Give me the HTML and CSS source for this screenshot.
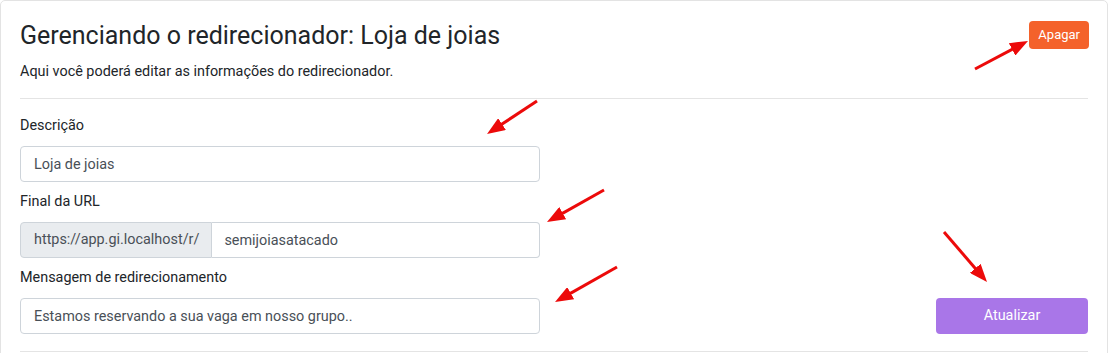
FILE: index.html
```html
<!DOCTYPE html>
<html lang="pt-BR">
<head>
<meta charset="UTF-8"/>
<meta name="viewport" content="width=device-width,initial-scale=1.0"/>
<title>Gerenciando o redirecionador</title>
<link rel="stylesheet" href="styles.css">
</head>
<body>

<div class="card">
  <!-- header -->
  <div class="card-head">
    <div>
      <h1 class="title">Gerenciando o redirecionador: Loja de joias</h1>
      <p class="subtitle">Aqui você poderá editar as informações do redirecionador.</p>
    </div>
    <button class="btn btn-danger">Apagar</button>
  </div>
  <hr>

  <!-- form -->
  <form class="form-row" onsubmit="return false">
    <div class="fields">
      <div class="field">
        <label for="desc">Descrição</label>
        <input id="desc" class="input" type="text" value="Loja de joias">
      </div>
      <div class="field">
        <label for="slug">Final da URL</label>
        <div class="input-group">
          <span class="prepend">https://app.gi.localhost/r/</span>
          <input id="slug" class="input" type="text" value="semijoiasatacado">
        </div>
      </div>
      <div class="field">
        <label for="msg">Mensagem de redirecionamento</label>
        <input id="msg" class="input" type="text" value="Estamos reservando a sua vaga em nosso grupo..">
      </div>
    </div>
    <button class="btn btn-primary">Atualizar</button>
  </form>
  <hr class="bottom">
</div>

<!-- annotation arrows -->
<svg class="marks" width="1110" height="353" viewBox="0 0 1110 353">
  <defs>
    <marker id="head" markerUnits="userSpaceOnUse" markerWidth="18" markerHeight="14" refX="10" refY="7" orient="auto">
      <path d="M0,0 L18,7 L0,14 z" fill="#ec0a0a"/>
    </marker>
  </defs>
  <g stroke="#ec0a0a" stroke-width="3" marker-end="url(#head)">
    <line x1="975" y1="69" x2="1020.9" y2="44.7"/>
    <line x1="537" y1="101" x2="493.7" y2="129.6"/>
    <line x1="604" y1="190" x2="554" y2="218.1"/>
    <line x1="617" y1="267" x2="562" y2="298.1"/>
    <line x1="944" y1="232" x2="981.8" y2="275.9"/>
  </g>
</svg>

</body>
</html>
```

FILE: styles.css
```css
*{margin:0;padding:0;box-sizing:border-box}
body{background:#fff;color:#212529;font-family:Roboto,"Liberation Sans",sans-serif;font-size:14.4px;line-height:20px;position:relative;overflow:hidden}

/* ---------- card ---------- */
.card{
  width:1108px;min-height:400px;padding:20px 19px 0;
  border:1px solid #e3e3e3;border-radius:5px;background:#fff
}
.card-head{display:flex;justify-content:space-between;align-items:flex-start}
.title{font-size:25px;font-weight:400;line-height:29px;color:#212529}
.subtitle{margin-top:12px;color:#212529}
hr{border:none;border-top:1px solid #e4e4e4;margin:16px 0 17px}
hr.bottom{margin:17px 0 0}

/* ---------- buttons ---------- */
.btn{border:none;color:#fff;font-family:inherit;cursor:pointer;border-radius:4px}
.btn-danger{background:#f4622b;font-size:13px;line-height:18px;padding:5px 9px;margin-right:-1px}
.btn-primary{background:#a976e8;font-size:14.4px;line-height:20px;width:152px;height:36px}

/* ---------- form ---------- */
.form-row{display:flex;justify-content:space-between;align-items:flex-end}
.fields{width:520px;display:flex;flex-direction:column}
.field + .field{margin-top:10px}
.field label{display:block;margin-bottom:10px}
.input{
  display:block;width:100%;height:36px;padding:0 13px;
  border:1px solid #ced4da;border-radius:4px;
  font-family:inherit;font-size:14.4px;color:#495057;background:#fff;outline:none
}
.input-group{display:flex}
.prepend{
  display:flex;align-items:center;flex:0 0 191px;padding:0 12px 0 13px;height:36px;white-space:nowrap;
  background:#e9ecef;color:#495057;border:1px solid #ced4da;border-radius:4px 0 0 4px
}
.input-group .input{flex:1;border-left:none;border-radius:0 4px 4px 0;padding-left:12px}

/* ---------- annotations ---------- */
.marks{position:absolute;left:0;top:0;pointer-events:none}
```
